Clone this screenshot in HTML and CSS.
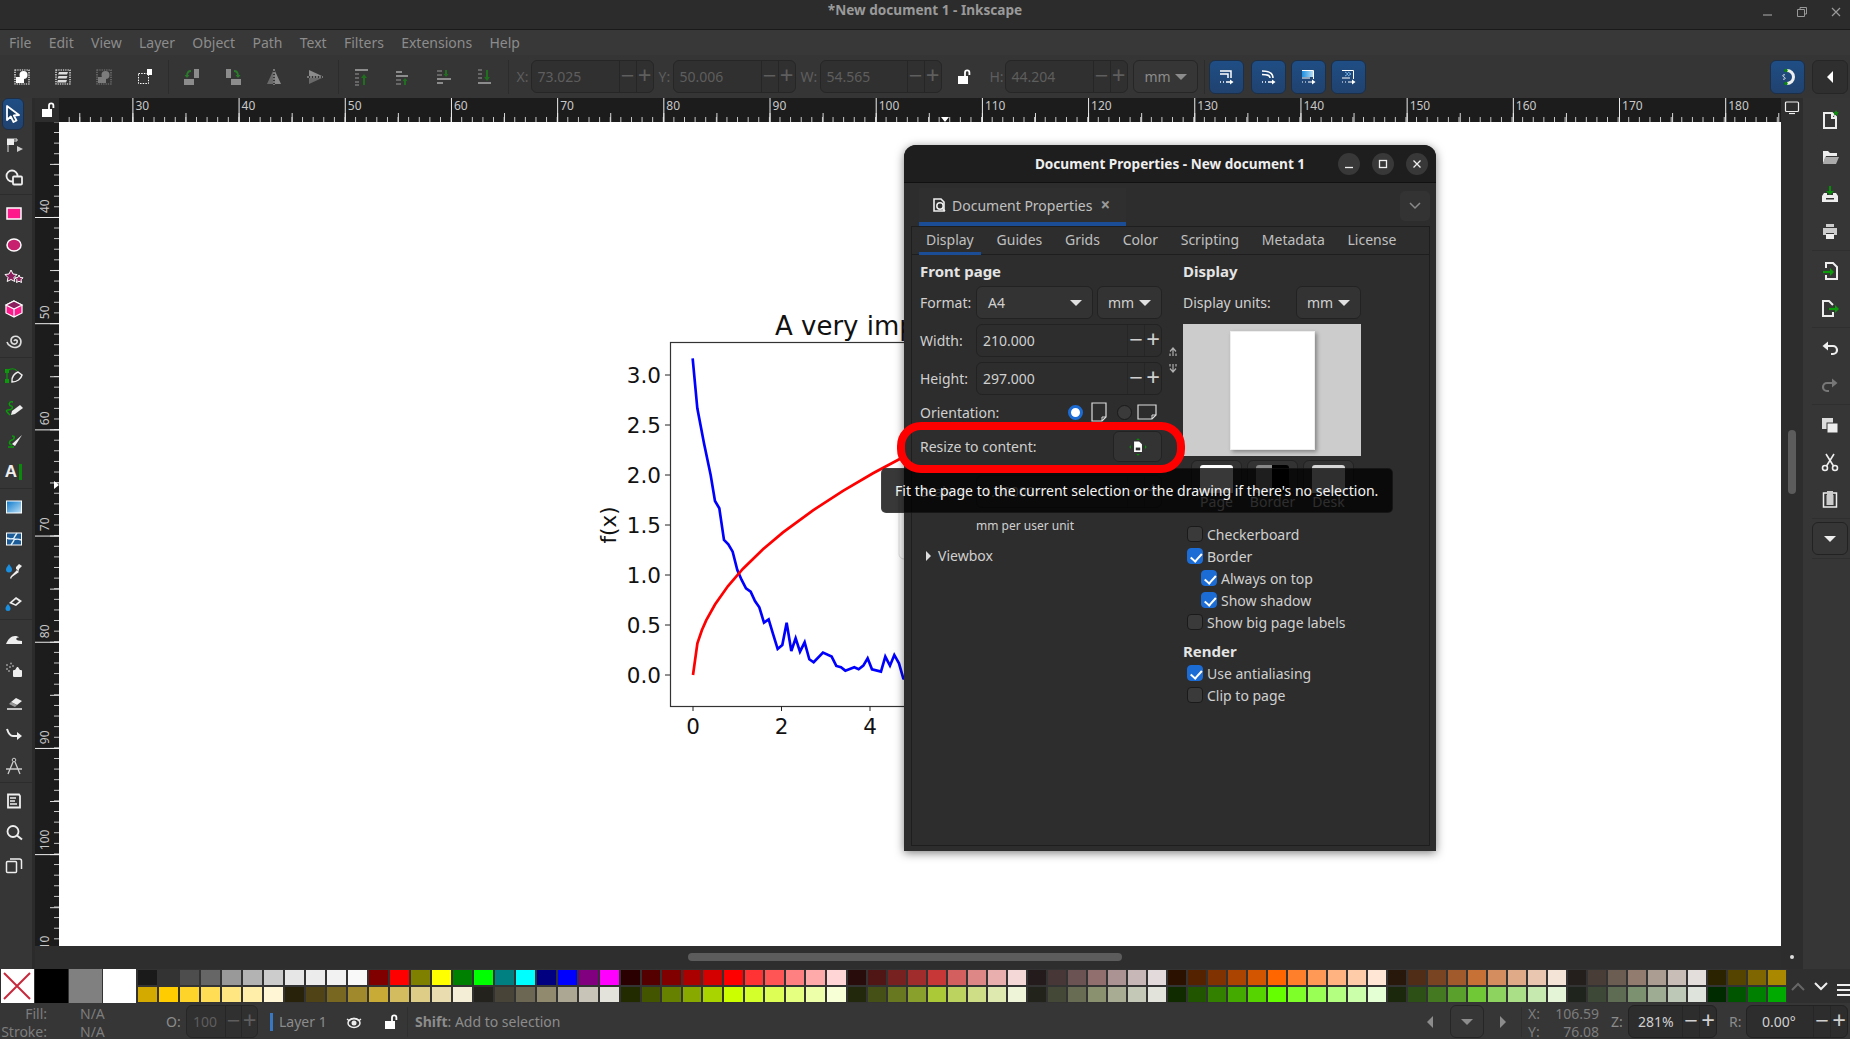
FILE: index.html
```html
<!DOCTYPE html>
<html lang="en">
<head>
    <meta charset="UTF-8">
    <title>*New document 1 - Inkscape</title>
    <link rel="stylesheet" href="styles.css">
</head>
<body>
<svg class="defs" width="0" height="0">
    <symbol id="i-lock" viewBox="0 0 16 16"><rect x="2" y="7" width="10" height="8" fill="currentColor"/><path d="M9 7V3.500a2.200 2.200 0 0 1 4.400 0V6" fill="none" stroke="currentColor" stroke-width="1.800"/></symbol>
    <symbol id="i-dots" viewBox="0 0 20 20"><rect x="3" y="3" width="14" height="14" fill="none" stroke="currentColor" stroke-width="1.200" stroke-dasharray="1.300 1"/></symbol>
    <symbol id="i-flow" viewBox="0 0 20 20"><path d="M4 4h11v7M4 7h8v4M4 15h1M7 15h1M10 15h4" fill="none" stroke="#fff" stroke-width="1.500"/><path d="M14 12.500l3.500 2.500-3.500 2.500z" fill="#fff"/></symbol>
</svg>

<div class="titlebar">
    <span class="title-text">*New document 1 - Inkscape</span>
    <div class="win-btns">
        <svg viewBox="0 0 12 12"><path d="M1 9h9" stroke="#999" stroke-width="1.200"/></svg>
        <svg viewBox="0 0 12 12"><path d="M1.500 3.500h7v7h-7zM4 3.500V1.500h6.500v6.500H8.500" fill="none" stroke="#999"/></svg>
        <svg viewBox="0 0 12 12"><path d="M2 2l8 8M10 2l-8 8" stroke="#999" stroke-width="1.200"/></svg>
    </div>
</div>

<div class="menubar">
    <span>File</span><span>Edit</span><span>View</span><span>Layer</span><span>Object</span><span>Path</span><span>Text</span><span>Filters</span><span>Extensions</span><span>Help</span>
</div>

<div class="toolbar">
    <div class="tb"><svg viewBox="0 0 20 20"><use href="#i-dots" color="#fff"/><rect x="4" y="10" width="8" height="6" fill="#fff"/><circle cx="11.500" cy="8" r="4" fill="#fff"/></svg></div>
    <div class="tb"><svg viewBox="0 0 20 20"><use href="#i-dots" color="#fff"/><path d="M6 5h9l-1 2.500H5zM5.500 9h9l-1 2.500h-9zM5 13h9l-1 2.500H4z" fill="#ddd"/></svg></div>
    <div class="tb dim"><svg viewBox="0 0 20 20"><use href="#i-dots" color="#fff"/><rect x="4" y="10" width="8" height="6" fill="#fff"/><circle cx="11.500" cy="8" r="4" fill="#fff"/></svg></div>
    <div class="tb"><svg viewBox="0 0 20 20"><rect x="3.500" y="6.500" width="10" height="10" fill="none" stroke="#fff" stroke-dasharray="1.500 1.200"/><rect x="12" y="2" width="5" height="6" fill="#fff"/></svg></div>
    <i class="vsep"></i>
    <div class="tb"><svg viewBox="0 0 20 20"><rect x="2" y="12" width="10" height="6" fill="#8c8c8c"/><rect x="12" y="2" width="5" height="9" fill="#8c8c8c"/><path d="M9 4C6 4 5 6 5 9" fill="none" stroke="#2b7a2b" stroke-width="1.800"/><path d="M2.500 8h5l-2.500 3z" fill="#2b7a2b"/></svg></div>
    <div class="tb"><svg viewBox="0 0 20 20"><rect x="8" y="12" width="10" height="6" fill="#8c8c8c"/><rect x="3" y="2" width="5" height="9" fill="#8c8c8c"/><path d="M11 4c3 0 4 2 4 5" fill="none" stroke="#2b7a2b" stroke-width="1.800"/><path d="M17.500 8h-5l2.500 3z" fill="#2b7a2b"/></svg></div>
    <div class="tb"><svg viewBox="0 0 20 20"><path d="M9 4v13H3z" fill="#6a6a6a"/><path d="M11 4v13h6z" fill="#8c8c8c"/><path d="M10 2v16" stroke="#bbb" stroke-dasharray="2 1"/></svg></div>
    <div class="tb"><svg viewBox="0 0 20 20"><path d="M4 3l13 6H4z" fill="#8c8c8c"/><path d="M4 11h13L4 17z" fill="#6a6a6a"/><path d="M2 10h16" stroke="#bbb" stroke-dasharray="2 1"/></svg></div>
    <i class="vsep"></i>
    <div class="tb"><svg viewBox="0 0 20 20"><path d="M3 3h13" stroke="#8c8c8c" stroke-width="2"/><path d="M3 7h4M3 11h4M3 15h4M3 18h4" stroke="#777" stroke-width="1.500"/><path d="M12 18V9" stroke="#1f6f1f" stroke-width="2"/><path d="M9 11l3-4 3 4z" fill="#1f6f1f"/></svg></div>
    <div class="tb"><svg viewBox="0 0 20 20"><path d="M3 5h6" stroke="#8c8c8c" stroke-width="2"/><path d="M3 9h12" stroke="#8c8c8c" stroke-width="2"/><path d="M3 13h5M3 17h5" stroke="#777" stroke-width="1.500"/><path d="M12 18v-5" stroke="#1f6f1f" stroke-width="2"/><path d="M9.500 14l2.500-3 2.500 3z" fill="#1f6f1f"/></svg></div>
    <div class="tb"><svg viewBox="0 0 20 20"><path d="M3 4h5M3 8h5" stroke="#777" stroke-width="1.500"/><path d="M3 12h14" stroke="#8c8c8c" stroke-width="2"/><path d="M3 16h6" stroke="#8c8c8c" stroke-width="2"/><path d="M12 3v5" stroke="#1f6f1f" stroke-width="2"/><path d="M9.500 7l2.500 3 2.500-3z" fill="#1f6f1f"/></svg></div>
    <div class="tb"><svg viewBox="0 0 20 20"><path d="M3 3h4M3 7h4M3 11h4" stroke="#777" stroke-width="1.500"/><path d="M3 16h13" stroke="#8c8c8c" stroke-width="2"/><path d="M12 3v8" stroke="#1f6f1f" stroke-width="2"/><path d="M9 10l3 4 3-4z" fill="#1f6f1f"/></svg></div>
    <i class="vsep vsep-last"></i>
    <span class="tb-label w14">X:</span>
    <div class="spin off w123"><span class="val">73.025</span><span class="pm">−</span><span class="pm">+</span></div>
    <span class="tb-label w14 ml5">Y:</span>
    <div class="spin off w123"><span class="val">50.006</span><span class="pm">−</span><span class="pm">+</span></div>
    <span class="tb-label w19 ml5">W:</span>
    <div class="spin off w122"><span class="val">54.565</span><span class="pm">−</span><span class="pm">+</span></div>
    <div class="tb-lock"><svg><use href="#i-lock" color="#fff"/></svg></div>
    <span class="tb-label w15">H:</span>
    <div class="spin off w123"><span class="val">44.204</span><span class="pm">−</span><span class="pm">+</span></div>
    <div class="combo off tb-unit">mm<i class="caret"></i></div>
    <i class="vsep vsep-unit"></i>
    <div class="bluebtn"><svg viewBox="0 0 20 20"><use href="#i-flow"/></svg></div>
    <div class="bluebtn"><svg viewBox="0 0 20 20"><path d="M4 4c6 0 11 1 11 7M4 7.500c4 0 8 0 8 3.500M4 15h1M7 15h1M10 15h4" fill="none" stroke="#fff" stroke-width="1.500"/><path d="M14 12.500l3.500 2.500-3.500 2.500z" fill="#fff"/></svg></div>
    <div class="bluebtn"><svg viewBox="0 0 20 20"><defs><linearGradient id="g-blue" x1="0" x2="1"><stop offset="0" stop-color="#1c8fe0"/><stop offset="1" stop-color="#b5dcf5"/></linearGradient></defs><rect x="4" y="4" width="11" height="6" fill="url(#g-blue)"/><path d="M4 3.500h11.500V12M4 11h8M4 15h1M7 15h1M10 15h4" fill="none" stroke="#fff"/><path d="M14 12.500l3.500 2.500-3.500 2.500z" fill="#fff"/></svg></div>
    <div class="bluebtn"><svg viewBox="0 0 20 20"><path d="M4 3.500h11.500V12M4 11h8M4 15h1M7 15h1M10 15h4" fill="none" stroke="#fff"/><path d="M7 5l3 2-3 2M10 5l3 2-3 2" fill="none" stroke="#7ab8ea"/><path d="M14 12.500l3.500 2.500-3.500 2.500z" fill="#fff"/></svg></div>
    <div class="tb-spacer"></div>
    <div class="bluebtn"><svg viewBox="0 0 20 20"><path d="M9 3.500a6.500 6.500 0 0 1 0 13" fill="none" stroke="#eee" stroke-width="3"/><circle cx="8" cy="3.500" r="1.700" fill="#0a8a0a"/><circle cx="8" cy="16.500" r="1.700" fill="#0a8a0a"/><path d="M7 8c-2-1-3 1-1 2s1 3-1 2" fill="none" stroke="#eee"/></svg></div>
    <div class="darkbtn"><svg viewBox="0 0 20 20"><path d="M13 4v12l-6-6z" fill="#fff"/></svg></div>
</div>

<div class="main">
    <div class="tools">
        <div class="tool active"><svg viewBox="0 0 20 20"><path d="M4 2v14l3.800-3.500L10.500 18l3-1.500-2.700-5 5.200-.5z" fill="#173a63" stroke="#fff" stroke-width="1.800" stroke-linejoin="round"/></svg></div>
        <div class="tool"><svg viewBox="0 0 20 20"><path d="M3 3h10v2H7l-3 2v9" fill="none" stroke="#ddd"/><rect x="3" y="3" width="7" height="6" fill="#eee"/><path d="M13 10l6 3-6 3z" fill="#ccc"/></svg></div>
        <div class="tool"><svg viewBox="0 0 20 20"><circle cx="8" cy="8" r="5.500" fill="none" stroke="#eee" stroke-width="1.800"/><rect x="9" y="8.500" width="9" height="8" rx="1" fill="#333" stroke="#eee" stroke-width="1.800"/></svg></div>
        <i class="hsep"></i>
        <div class="tool"><svg viewBox="0 0 20 20"><rect x="3" y="5" width="14" height="11" fill="#ff1a8c" stroke="#fff" stroke-width="1.500"/></svg></div>
        <div class="tool"><svg viewBox="0 0 20 20"><ellipse cx="10" cy="10" rx="7" ry="6" fill="#c7206f" stroke="#fff" stroke-width="1.500"/></svg></div>
        <div class="tool"><svg viewBox="0 0 20 20"><path d="M7 3l2 4 4 .5-3 3 .8 4-3.800-2-3.800 2 .8-4-3-3 4-.5z" fill="#8e1f5e" stroke="#fff"/><path d="M15 8l1.200 2.500 2.800.3-2 2 .5 2.700-2.500-1.300-2.500 1.300.5-2.700-2-2 2.800-.3z" fill="#8e1f5e" stroke="#fff"/></svg></div>
        <div class="tool"><svg viewBox="0 0 20 20"><path d="M10 2l8 4v8l-8 4-8-4V6z" fill="#ff1a8c" stroke="#fff" stroke-width="1.200"/><path d="M10 2l8 4-8 4-8-4z" fill="#8e1f5e" stroke="#fff" stroke-width="1.200"/><path d="M10 10v8" stroke="#fff" stroke-width="1.200"/></svg></div>
        <div class="tool"><svg viewBox="0 0 20 20"><path d="M10 10c1-2 4-1 3 1.500s-6 2-6-2 5-5.500 8-3 2.500 8-1.500 9.500S4 15 3 11" fill="none" stroke="#ddd" stroke-width="1.600"/></svg></div>
        <i class="hsep"></i>
        <div class="tool"><svg viewBox="0 0 20 20"><rect x="1" y="3" width="4" height="4" fill="#0a9a0a"/><rect x="1" y="13" width="4" height="4" fill="#0a9a0a"/><path d="M3 7v6M3 5c4-3 8-3 10 0" fill="none" stroke="#0a9a0a" stroke-width="1.200"/><path d="M8 16c-1-5 3-9 6-10l4 3c-1 4-5 7-10 7z" fill="#333" stroke="#eee" stroke-width="1.500"/></svg></div>
        <div class="tool"><svg viewBox="0 0 20 20"><path d="M9 4c-4-1-5 3-2 4s1 4-3 4 1 4 2 5" fill="none" stroke="#0a9a0a" stroke-width="1.500"/><path d="M8 13l8-6 3 3-8 6-4 1z" fill="#eee"/></svg></div>
        <div class="tool"><svg viewBox="0 0 20 20"><path d="M8 6c3 0 3 3 0 4s-4 4 0 5M4 17h6" fill="none" stroke="#0a9a0a" stroke-width="1.500"/><path d="M8 14l10-9-7 11z" fill="#eee"/></svg></div>
        <div class="tool tool-text"><span class="text-a">A</span><i class="text-cursor"></i></div>
        <i class="hsep"></i>
        <div class="tool"><svg viewBox="0 0 20 20"><defs><linearGradient id="g-tool" x1="0" x2="1" y1="0" y2="1"><stop offset="0" stop-color="#0a78cc"/><stop offset="1" stop-color="#bfe2f7"/></linearGradient></defs><rect x="2.500" y="4" width="15" height="12" fill="url(#g-tool)" stroke="#fff"/></svg></div>
        <div class="tool"><svg viewBox="0 0 20 20"><rect x="2.500" y="4" width="15" height="12" fill="#1c5d99" stroke="#fff"/><path d="M3 9c4 2 6 0 7 1s-2 4-3 6M17 11c-4-2-6 0-7-1s2-4 3-6" fill="none" stroke="#e6f2fb" stroke-width="1.400"/></svg></div>
        <div class="tool"><svg viewBox="0 0 20 20"><path d="M5 3c2 3 3 4 3 5.500a3 3 0 0 1-6 0C2 7 3 6 5 3z" fill="#1a8fe0"/><path d="M8 16l-1 2-1-1 1-2 6-6 2 2z" fill="#eee"/><path d="M12 6l3-3 3 2-3 3v2l-3-2z" fill="#eee"/></svg></div>
        <div class="tool"><svg viewBox="0 0 20 20"><path d="M4 11c1.500 2 2.500 3 2.500 4.500a2.500 2.500 0 0 1-5 0C1.500 14 2.500 13 4 11z" fill="#1a8fe0"/><path d="M5 10l7-6 6 4-6 5z" fill="#eee"/><path d="M8 9.500l4-3.300 3 2-3.500 3z" fill="#333"/></svg></div>
        <i class="hsep"></i>
        <div class="tool"><svg viewBox="0 0 20 20"><path d="M2 16c2-5 5-8 9-8 2 0 3 .5 4 1.500-3 0-4 2-1 3l4 .500v3z" fill="#eee"/></svg></div>
        <div class="tool"><svg viewBox="0 0 20 20"><rect x="9" y="10" width="9" height="7" rx="1" fill="#eee"/><path d="M11 10l2-3h1l2 3z" fill="#eee"/><circle cx="3" cy="5" r="1" fill="#999"/><circle cx="6" cy="7" r="1" fill="#999"/><circle cx="3" cy="9" r="1" fill="#999"/><circle cx="7" cy="3.500" r="1" fill="#999"/><circle cx="9" cy="6" r="1" fill="#999"/><circle cx="5" cy="11" r="1" fill="#999"/></svg></div>
        <div class="tool"><svg viewBox="0 0 20 20"><path d="M7 10l5-4 6 3-5 4z" fill="#eee"/><path d="M5 12l2-2 6 3-2 2z" fill="#999"/><path d="M3 17h15" stroke="#eee" stroke-width="1.500"/></svg></div>
        <div class="tool"><svg viewBox="0 0 20 20"><path d="M3 5c2 6 4 7 6 7 1.500 0 3 0 5 0" fill="none" stroke="#eee" stroke-width="2"/><path d="M13 8l5 4-5 4z" fill="#eee"/></svg></div>
        <div class="tool"><svg viewBox="0 0 20 20"><circle cx="10" cy="4" r="1.800" fill="none" stroke="#ccc"/><path d="M9 6L4 18M11 6l5 12M2 13h16" fill="none" stroke="#ccc" stroke-width="1.300"/></svg></div>
        <i class="hsep"></i>
        <div class="tool"><svg viewBox="0 0 20 20"><path d="M4 3.500h11l1 1.500v11.500H4z" fill="none" stroke="#eee" stroke-width="1.800"/><path d="M6 7h6M6 10h5M6 13h7" stroke="#eee" stroke-width="1.300"/></svg></div>
        <div class="tool"><svg viewBox="0 0 20 20"><circle cx="9" cy="8.500" r="5.500" fill="none" stroke="#eee" stroke-width="1.800"/><path d="M13 12.500l5 4" stroke="#eee" stroke-width="2"/></svg></div>
        <div class="tool"><svg viewBox="0 0 20 20"><rect x="2.500" y="6.500" width="10" height="11" rx="1" fill="none" stroke="#eee" stroke-width="1.500"/><path d="M6 4h9.500a2 2 0 0 1 2 2v8" fill="none" stroke="#eee" stroke-width="1.500"/></svg></div>
    </div>

    <div class="center">
        <div class="work">
            <div class="corner"><svg><use href="#i-lock" color="#fff"/></svg></div>
            <div class="ruler-h">
                <span>30</span><span>40</span><span>50</span><span>60</span><span>70</span><span>80</span><span>90</span><span>100</span>
                <span>110</span><span>120</span><span>130</span><span>140</span><span>150</span><span>160</span><span>170</span><span>180</span>
                <i class="marker-h"></i>
            </div>
            <div class="ruler-v">
                <span class="first">40</span><span>50</span><span>60</span><span>70</span><span>80</span><span>90</span><span>100</span><span>110</span>
                <i class="marker-v"></i>
            </div>
            <div class="canvas">
                <svg class="plot" viewBox="59 122 1722 824">
                    <rect x="899" y="490" width="30" height="69" rx="5" fill="#fff" stroke="#ddd"/>
                    <text class="plot-title" x="775" y="335">A very important plot</text>
                    <rect x="670.500" y="342.500" width="400" height="364" fill="none" stroke="#333" stroke-width="1.200"/>
                    <path d="M665 375h5M665 425h5M665 475h5M665 525h5M665 575h5M665 625h5M665 675h5M693 706v5M781.500 706v5M870 706v5" stroke="#222"/>
                    <g class="plot-y">
                        <text x="661" y="383">3.0</text><text x="661" y="433">2.5</text><text x="661" y="483">2.0</text><text x="661" y="533">1.5</text><text x="661" y="583">1.0</text><text x="661" y="633">0.5</text><text x="661" y="683">0.0</text>
                    </g>
                    <g class="plot-x">
                        <text x="693" y="734">0</text><text x="781.500" y="734">2</text><text x="870" y="734">4</text>
                    </g>
                    <text class="plot-f" transform="translate(616 525) rotate(-90)">f(x)</text>
                    <g transform="translate(580 300) scale(.3333)" fill="none" stroke-width="8">
                        <path stroke="#00f" d="M338 175L352 325 372 430 392 525 405 603 418 625 432 720 445 733 458 755 472 810 485 840 498 865 512 875 525 903 538 922 552 968 566 958 580 1005 593 1047 607 1035 620 968 634 1053 647 1015 660 1055 674 1027 688 1078 701 1087 729 1058 755 1070 769 1098 783 1102 796 1112 823 1102 836 1108 850 1097 863 1075 876 1108 903 1115 916 1070 930 1097 943 1065 957 1090 970 1135 990 1140"/>
                    </g>
                    <path fill="none" stroke="#f00" stroke-width="2.700" d="M693 675L697.400 643.400 701.850 630.300 706.300 620.200 715 604.500 728 586 743 568.700 763 549.200 783 532.400 813 510.300 843 490.900 873 473.300 903 457.200 933 442.100"/>
                </svg>
            </div>
        </div>
        <div class="hscroll"><i></i></div>
    </div>

    <div class="vscroll">
        <svg viewBox="0 0 16 16"><rect x="1.500" y="2" width="13" height="9.500" rx="1" fill="none" stroke="#eee" stroke-width="1.200"/><path d="M5 13.500h6" stroke="#eee" stroke-width="1.200"/></svg>
        <i class="vthumb"></i>
        <i class="vdot"></i>
    </div>

    <div class="side">
        <div class="side-btn"><svg viewBox="0 0 20 20"><path d="M4 3h8l4 4v11H4z" fill="none" stroke="#eee" stroke-width="2"/><path d="M11 3h2v4h3v2h-5z" fill="#eee"/><path d="M16 0l1 2 2 .2-1.500 1.400.5 2-2-1-2 1 .5-2L13 2.200l2-.2z" fill="#0a8a0a"/></svg></div>
        <div class="side-btn"><svg viewBox="0 0 20 20"><path d="M3 4h5l2 2h7v3H6l-3 8z" fill="#eee"/><path d="M5 10h14l-3 7H3z" fill="#aaa"/></svg></div>
        <div class="side-btn"><svg viewBox="0 0 20 20"><path d="M2 12l2-3h3v2h6V9h3l2 3v6H2z" fill="#eee"/><rect x="6" y="14" width="8" height="1.500" fill="#333"/><path d="M10 2v7" stroke="#0a8a0a" stroke-width="2.200"/><path d="M6 7h8l-4 4z" fill="#0a8a0a"/></svg></div>
        <div class="side-btn"><svg viewBox="0 0 20 20"><rect x="6" y="3" width="8" height="3" fill="#ccc"/><path d="M3 7h14v7h-3v-2H6v2H3z" fill="#ccc"/><rect x="6" y="13" width="8" height="5" fill="#eee"/></svg></div>
        <i class="hsep"></i>
        <div class="side-btn"><svg viewBox="0 0 20 20"><path d="M6 7V2h7l4 4v12H6v-4" fill="none" stroke="#eee" stroke-width="2"/><path d="M3 11h9" stroke="#0a9a0a" stroke-width="2.200"/><path d="M10 7l4 4-4 4z" fill="#0a9a0a"/></svg></div>
        <div class="side-btn"><svg viewBox="0 0 20 20"><path d="M13 7l-4-4H3v15h10v-4" fill="none" stroke="#eee" stroke-width="2"/><path d="M9 11h8" stroke="#0a9a0a" stroke-width="2.200"/><path d="M15 7l4 4-4 4z" fill="#0a9a0a"/></svg></div>
        <i class="hsep"></i>
        <div class="side-btn"><svg viewBox="0 0 20 20"><path d="M5 8h8a3.500 3.500 0 0 1 0 8h-2" fill="none" stroke="#eee" stroke-width="2.200"/><path d="M8 3.500v9L2.500 8z" fill="#eee"/></svg></div>
        <div class="side-btn"><svg viewBox="0 0 20 20"><path d="M15 8H7a3.500 3.500 0 0 0 0 8h2" fill="none" stroke="#777" stroke-width="2.200"/><path d="M12 3.500v9L17.500 8z" fill="#777"/></svg></div>
        <i class="hsep"></i>
        <div class="side-btn"><svg viewBox="0 0 20 20"><rect x="2" y="3" width="11" height="11" fill="#ddd"/><rect x="7" y="8" width="11" height="10" fill="#eee" stroke="#363636"/></svg></div>
        <div class="side-btn"><svg viewBox="0 0 20 20"><circle cx="5" cy="16" r="2.500" fill="none" stroke="#eee" stroke-width="1.600"/><circle cx="15" cy="16" r="2.500" fill="none" stroke="#eee" stroke-width="1.600"/><path d="M6.500 14L14 2M13.500 14L6 2" stroke="#eee" stroke-width="1.600"/></svg></div>
        <div class="side-btn"><svg viewBox="0 0 20 20"><rect x="3.500" y="4" width="13" height="14" fill="none" stroke="#eee" stroke-width="1.500"/><rect x="7" y="2" width="6" height="4" fill="#ccc"/><rect x="6.500" y="6" width="7" height="10" fill="#ccc"/></svg></div>
        <i class="hsep"></i>
        <div class="side-more"><i class="caret big"></i></div>
        <i class="hsep"></i>
    </div>
</div>

<div class="palette">
    <div class="big-sw none"><svg viewBox="0 0 32 32"><path d="M3 3l26 26M29 3L3 29" stroke="#c8283c" stroke-width="2"/></svg></div>
    <div class="big-sw sw-black"></div>
    <div class="big-sw sw-gray"></div>
    <div class="big-sw sw-white"></div>
    <div class="swatches">
        <i style="background:#1a1a1a"></i><i style="background:#333"></i><i style="background:#4d4d4d"></i><i style="background:#666"></i><i style="background:#999"></i><i style="background:#b3b3b3"></i><i style="background:#ccc"></i><i style="background:#e6e6e6"></i><i style="background:#ececec"></i><i style="background:#f2f2f2"></i><i style="background:#f9f9f9"></i>
        <i style="background:#800000"></i><i style="background:#f00"></i><i style="background:#808000"></i><i style="background:#ff0"></i><i style="background:#008000"></i><i style="background:#0f0"></i><i style="background:#008080"></i><i style="background:#0ff"></i><i style="background:#000080"></i><i style="background:#00f"></i><i style="background:#800080"></i><i style="background:#f0f"></i>
        <i style="background:#2b0000"></i><i style="background:#550000"></i><i style="background:#800000"></i><i style="background:#aa0000"></i><i style="background:#d40000"></i><i style="background:#f00"></i><i style="background:#f33"></i><i style="background:#f55"></i><i style="background:#ff8080"></i><i style="background:#faa"></i><i style="background:#ffd5d5"></i>
        <i style="background:#280b0b"></i><i style="background:#501616"></i><i style="background:#782121"></i><i style="background:#a02c2c"></i><i style="background:#c83737"></i><i style="background:#d35f5f"></i><i style="background:#de8787"></i><i style="background:#e9afaf"></i><i style="background:#f4d7d7"></i>
        <i style="background:#241c1c"></i><i style="background:#483737"></i><i style="background:#6c5353"></i><i style="background:#916f6f"></i><i style="background:#ac9393"></i><i style="background:#c8b7b7"></i><i style="background:#e3dbdb"></i>
        <i style="background:#2b1100"></i><i style="background:#552200"></i><i style="background:#803300"></i><i style="background:#a40"></i><i style="background:#d45500"></i><i style="background:#f60"></i><i style="background:#ff7f2a"></i><i style="background:#f95"></i><i style="background:#ffb380"></i><i style="background:#fca"></i><i style="background:#ffe6d5"></i>
        <i style="background:#28170b"></i><i style="background:#502d16"></i><i style="background:#784421"></i><i style="background:#a05a2c"></i><i style="background:#c87137"></i><i style="background:#d38d5f"></i><i style="background:#deaa87"></i><i style="background:#e9c6af"></i><i style="background:#f4e3d7"></i>
        <i style="background:#241f1c"></i><i style="background:#483e37"></i><i style="background:#6c5d53"></i><i style="background:#917c6f"></i><i style="background:#ac9d93"></i><i style="background:#c8beb7"></i><i style="background:#e3dedb"></i>
        <i style="background:#2b2200"></i><i style="background:#540"></i><i style="background:#806600"></i><i style="background:#a80"></i>

        <i style="background:#d4aa00"></i><i style="background:#fc0"></i><i style="background:#ffd42a"></i><i style="background:#fd5"></i><i style="background:#ffe680"></i><i style="background:#fea"></i><i style="background:#fff6d5"></i>
        <i style="background:#28220b"></i><i style="background:#504416"></i><i style="background:#786721"></i><i style="background:#a0892c"></i><i style="background:#c8ab37"></i><i style="background:#d3bc5f"></i><i style="background:#decd87"></i><i style="background:#e9ddaf"></i><i style="background:#f4eed7"></i>
        <i style="background:#24221c"></i><i style="background:#484437"></i><i style="background:#6c6753"></i><i style="background:#918a6f"></i><i style="background:#aca793"></i><i style="background:#c8c4b7"></i><i style="background:#e3e2db"></i>
        <i style="background:#222b00"></i><i style="background:#450"></i><i style="background:#668000"></i><i style="background:#8a0"></i><i style="background:#aad400"></i><i style="background:#cf0"></i><i style="background:#d4ff2a"></i><i style="background:#df5"></i><i style="background:#e5ff80"></i><i style="background:#efa"></i><i style="background:#f6ffd5"></i>
        <i style="background:#22280b"></i><i style="background:#445016"></i><i style="background:#677821"></i><i style="background:#89a02c"></i><i style="background:#abc837"></i><i style="background:#bcd35f"></i><i style="background:#cdde87"></i><i style="background:#dde9af"></i><i style="background:#eef4d7"></i>
        <i style="background:#22241c"></i><i style="background:#444837"></i><i style="background:#676c53"></i><i style="background:#8a916f"></i><i style="background:#a7ac93"></i><i style="background:#c4c8b7"></i><i style="background:#e2e3db"></i>
        <i style="background:#112b00"></i><i style="background:#250"></i><i style="background:#338000"></i><i style="background:#4a0"></i><i style="background:#55d400"></i><i style="background:#6f0"></i><i style="background:#7fff2a"></i><i style="background:#9f5"></i><i style="background:#b3ff80"></i><i style="background:#cfa"></i><i style="background:#e5ffd5"></i>
        <i style="background:#1c280b"></i><i style="background:#2d5016"></i><i style="background:#447821"></i><i style="background:#5aa02c"></i><i style="background:#71c837"></i><i style="background:#8dd35f"></i><i style="background:#aade87"></i><i style="background:#c6e9af"></i><i style="background:#e3f4d7"></i>
        <i style="background:#1f241c"></i><i style="background:#3e4837"></i><i style="background:#5d6c53"></i><i style="background:#7c916f"></i><i style="background:#9dac93"></i><i style="background:#bec8b7"></i><i style="background:#dee3db"></i>
        <i style="background:#002b00"></i><i style="background:#050"></i><i style="background:#008000"></i><i style="background:#0a0"></i>
    </div>
    <svg class="pal-ctl" viewBox="0 0 63 34">
        <path d="M4 21l6-6 6 6" fill="none" stroke="#666" stroke-width="2"/>
        <path d="M27 14l6 6 6-6" fill="none" stroke="#eee" stroke-width="2"/>
        <path d="M49 16h14M49 21h14M49 26h14" stroke="#eee" stroke-width="2"/>
    </svg>
</div>

<div class="statusbar">
    <div class="fillstroke">
        <span class="fs-l">Fill:</span><span>N/A</span>
        <span class="fs-l">Stroke:</span><span>N/A</span>
    </div>
    <span class="st-o">O:</span>
    <div class="spin off st-op"><span class="val">100</span><span class="pm">−</span><span class="pm">+</span></div>
    <i class="layer-bar"></i>
    <span class="st-layer">Layer 1</span>
    <svg class="st-eye" viewBox="0 0 16 16"><path d="M1 5l2 1.500C6 4 10 4 13 6.500L15 5" fill="none" stroke="#eee" stroke-width="1.400"/><ellipse cx="8" cy="9" rx="6" ry="4.500" fill="none" stroke="#eee" stroke-width="1.500"/><circle cx="8" cy="9" r="2.500" fill="#eee"/></svg>
    <svg class="st-lock"><use href="#i-lock" color="#fff"/></svg>
    <i class="st-sep"></i>
    <span class="st-msg"><b>Shift</b>: Add to selection</span>
    <div class="st-right">
        <svg class="st-arrow" viewBox="0 0 10 16"><path d="M8 2v12L2 8z" fill="#8c8c8c"/></svg>
        <div class="combo off st-page"><i class="caret"></i></div>
        <svg class="st-arrow" viewBox="0 0 10 16"><path d="M2 2v12l6-6z" fill="#8c8c8c"/></svg>
        <i class="st-sep st-sep2"></i>
        <div class="coords">
            <span>X:</span><span class="num">106.59</span>
            <span>Y:</span><span class="num">76.08</span>
        </div>
        <span class="st-z">Z:</span>
        <div class="spin st-zoom"><span class="val">281%</span><span class="pm">−</span><span class="pm">+</span></div>
        <span class="st-r">R:</span>
        <div class="spin st-rot"><span class="val">0.00°</span><span class="pm">−</span><span class="pm">+</span></div>
    </div>
</div>

<!-- floating dialog, on top of the canvas -->
<div class="dialog">
    <div class="dlg-head">
        <span class="dlg-title">Document Properties - New document 1</span>
        <div class="dlg-btns">
            <span><svg viewBox="0 0 12 12"><path d="M2 9.500h8" stroke="#eee" stroke-width="1.300"/></svg></span>
            <span><svg viewBox="0 0 12 12"><rect x="2.500" y="2.500" width="7" height="7" fill="none" stroke="#eee" stroke-width="1.300"/></svg></span>
            <span><svg viewBox="0 0 12 12"><path d="M2.500 2.500l7 7M9.500 2.500l-7 7" stroke="#eee" stroke-width="1.300"/></svg></span>
        </div>
    </div>
    <div class="dock-tabs">
        <div class="dock-tab">
            <svg viewBox="0 0 16 16"><path d="M3 2h7l3 3v9H3z" fill="none" stroke="#eee" stroke-width="1.600"/><circle cx="9" cy="9" r="3.200" fill="none" stroke="#eee" stroke-width="1.500"/><path d="M11 11l3 3" stroke="#eee" stroke-width="1.500"/></svg>
            <span>Document Properties</span>
            <b>×</b>
        </div>
        <div class="dock-more"><svg viewBox="0 0 16 16"><path d="M3 5l5 5 5-5" fill="none" stroke="#8a8a8a" stroke-width="1.500"/></svg></div>
    </div>
    <div class="pane">
        <div class="nb-tabs">
            <span class="on">Display</span><span>Guides</span><span>Grids</span><span>Color</span><span>Scripting</span><span>Metadata</span><span>License</span>
        </div>
        <div class="nb-body">
            <div class="col-left">
                <h3>Front page</h3>
                <div class="row">
                    <label class="lbl-56">Format:</label>
                    <div class="combo grow">A4<i class="caret"></i></div>
                    <div class="combo unit">mm<i class="caret"></i></div>
                </div>
                <div class="row">
                    <label class="lbl-56">Width:</label>
                    <div class="spin grow"><span class="val">210.000</span><span class="pm">−</span><span class="pm">+</span></div>
                </div>
                <div class="row">
                    <label class="lbl-56">Height:</label>
                    <div class="spin grow"><span class="val">297.000</span><span class="pm">−</span><span class="pm">+</span></div>
                </div>
                <div class="row orient">
                    <label>Orientation:</label>
                    <div class="orient-opts">
                        <i class="radio on"></i>
                        <svg class="port" viewBox="0 0 16 20"><path d="M1 1h14v14l-4 4H1z" fill="none" stroke="#ddd" stroke-width="1.200"/><path d="M11 19v-4h4" fill="none" stroke="#ddd"/></svg>
                        <i class="radio"></i>
                        <svg class="land" viewBox="0 0 20 16"><path d="M1 1h18v10l-4 4H1z" fill="none" stroke="#ddd" stroke-width="1.200"/><path d="M15 15v-4h4" fill="none" stroke="#ddd"/></svg>
                    </div>
                </div>
                <div class="row resize">
                    <label>Resize to content:</label>
                    <div class="resize-btn"><svg viewBox="0 0 16 16"><path d="M4.500 3h4.500l2.500 2.500V12.500h-7z" fill="#fff"/><path d="M6 8.500h4v2.500H6z" fill="#2d2d2d"/><path d="M8 .2l1.700 1.600H6.300zM8 15.800l1.700-1.600H6.300zM.2 8L1.800 6.300v3.400zM15.800 8L14.200 6.300v3.400z" fill="#0a8a0a"/></svg></div>
                </div>
                <div class="row scale">
                    <label class="lbl-56">Scale x:</label>
                    <div class="spin grow"><span class="val">1.00000</span><span class="pm">−</span><span class="pm">+</span></div>
                </div>
                <div class="per-unit">mm per user unit</div>
                <div class="viewbox"><i></i>Viewbox</div>
            </div>
            <svg class="link" viewBox="0 0 12 30"><path d="M6 11V4M3 6.500L6 3l3 3.500M3 11V8.500M9 11V8.500M6 19v7M3 23.500L6 27l3-3.500M3 19v2.500M9 19v2.500" fill="none" stroke="#b0b0b0" stroke-width="1.200"/></svg>
            <div class="col-right">
                <h3>Display</h3>
                <div class="row">
                    <label class="lbl-units">Display units:</label>
                    <div class="combo unit">mm<i class="caret"></i></div>
                </div>
                <div class="preview"><div class="sheet"></div></div>
                <div class="colors">
                    <div class="color-cell"><div class="color-btn"><i class="c-page"></i></div><span>Page</span></div>
                    <div class="color-cell"><div class="color-btn"><i class="c-border"></i></div><span>Border</span></div>
                    <div class="color-cell"><div class="color-btn"><i class="c-desk"></i></div><span>Desk</span></div>
                </div>
                <div class="chk"><i></i>Checkerboard</div>
                <div class="chk"><i class="on"></i>Border</div>
                <div class="chk sub"><i class="on"></i>Always on top</div>
                <div class="chk sub"><i class="on"></i>Show shadow</div>
                <div class="chk"><i></i>Show big page labels</div>
                <h3 class="render">Render</h3>
                <div class="chk"><i class="on"></i>Use antialiasing</div>
                <div class="chk"><i></i>Clip to page</div>
            </div>
        </div>
    </div>
</div>

<div class="tooltip">Fit the page to the current selection or the drawing if there's no selection.</div>
<div class="red-oval"></div>
</body>
</html>
```

FILE: styles.css
```css
* {
    box-sizing: border-box;
    margin: 0;
    padding: 0;
}
body {
    width: 1850px;
    height: 1039px;
    overflow: hidden;
    position: relative;
    display: flex;
    flex-direction: column;
    background-color: #363636;
    font-family: "Noto Sans", "Open Sans", sans-serif;
    font-size: 14px;
    color: #8c8c8c;
}
i {
    display: block;
    font-style: normal;
}
.defs {
    position: absolute;
}

/* TITLE + MENU */
.titlebar {
    flex: none;
    height: 30px;
    background-color: #2c2c2c;
    border-bottom: 1px solid #1a1a1a;
    position: relative;
    display: flex;
    justify-content: center;
    align-items: center;
}
.title-text {
    font-weight: 700;
    font-size: 13.600px;
    color: #9a9a9a;
    margin-bottom: 9px;
    line-height: 18px;
}
.win-btns {
    position: absolute;
    right: 8px;
    top: 6px;
    display: flex;
    gap: 22px;
}
.win-btns svg {
    width: 12px;
    height: 12px;
}
.menubar {
    flex: none;
    height: 25px;
    background-color: #383838;
    display: flex;
    align-items: center;
    padding-left: 9px;
    gap: 17.300px;
}

/* TOP TOOLBAR */
.toolbar {
    flex: none;
    height: 43px;
    background-color: #353535;
    display: flex;
    align-items: center;
    padding-left: 1px;
}
.tb {
    width: 41px;
    height: 34px;
    flex: none;
    display: flex;
    align-items: center;
    justify-content: center;
}
.tb svg {
    width: 20px;
    height: 20px;
}
.tb.dim {
    opacity: 0.35;
}
.vsep {
    flex: none;
    width: 1px;
    height: 34px;
    background-color: #2c2c2c;
    margin: 0 2.500px;
}
.vsep-last {
    margin-right: 8px;
}
.vsep-unit {
    margin: 0 4px 0 6px;
}
.vsep-unit + .bluebtn {
    margin-right: 7px;
}
.tb-label {
    flex: none;
    color: #5e5e5e;
}
.w14 { width: 14px; }
.w15 { width: 15px; }
.w19 { width: 19px; }
.w122 { width: 122px; }
.w123 { width: 123px; }
.ml5 { margin-left: 5px; }
.tb-lock {
    flex: none;
    width: 48px;
    display: flex;
    justify-content: center;
    padding-right: 3px;
}
.tb-lock svg {
    width: 16px;
    height: 16px;
}
.tb-unit {
    flex: none;
    width: 65px;
    height: 34px;
    margin-left: 5px;
    padding: 0 11px 0 7px;
}
.tb-spacer {
    flex: 1;
}
.bluebtn {
    flex: none;
    width: 35px;
    height: 34px;
    margin-right: 5px;
    border-radius: 6px;
    border: 1px solid #1d2f47;
    background: linear-gradient(#1f4e85, #20426f);
    display: flex;
    align-items: center;
    justify-content: center;
}
.bluebtn svg {
    width: 20px;
    height: 20px;
}
.darkbtn {
    flex: none;
    width: 36px;
    height: 34px;
    margin-right: 2px;
    margin-left: 2px;
    border-radius: 6px;
    border: 1px solid #262626;
    background-color: #2f2f2f;
    display: flex;
    align-items: center;
    justify-content: center;
}
.darkbtn svg {
    width: 20px;
    height: 20px;
}

/* SPIN + COMBO */
.spin {
    display: flex;
    align-items: stretch;
    height: 33px;
    border: 1px solid #222;
    border-radius: 6px;
    background-color: #2d2d2d;
    color: #d0d0d0;
}
.spin .val {
    flex: 1;
    padding-left: 6px;
    line-height: 31px;
}
.spin .pm {
    flex: none;
    width: 17px;
    text-align: center;
    line-height: 28px;
    font-size: 24px;
    border-left: 1px solid #262626;
}
.spin.off {
    background-color: #303030;
    border-color: #262626;
    color: #5e5e5e;
}
.combo {
    display: flex;
    align-items: center;
    justify-content: space-between;
    height: 33px;
    padding: 0 10px 0 11px;
    border: 1px solid #222;
    border-radius: 6px;
    background-color: #333;
    color: #d0d0d0;
}
.combo.off {
    color: #8c8c8c;
    border-color: #262626;
    background-color: #363636;
    flex: none;
}
.caret {
    width: 0;
    height: 0;
    border-left: 6px solid transparent;
    border-right: 6px solid transparent;
    border-top: 6px solid #e0e0e0;
}
.combo.off .caret {
    border-top-color: #8c8c8c;
}

/* MAIN AREA */
.main {
    flex: none;
    height: 871px;
    display: flex;
}
.tools {
    flex: none;
    width: 35px;
    background-color: #363636;
    border-right: 3px solid #2b2b2b;
}
.tool {
    width: 27px;
    height: 32px;
    display: flex;
    align-items: center;
    justify-content: center;
}
.tool svg {
    width: 20px;
    height: 20px;
}
.tool.active {
    width: 22px;
    margin-left: 2px;
    border-radius: 6px;
    border: 1px solid #1d2f47;
    background: linear-gradient(#1f4e85, #20426f);
}
.text-a {
    font-family: "Liberation Sans", sans-serif;
    font-weight: 700;
    font-size: 17px;
    color: #eee;
}
.text-cursor {
    width: 3px;
    height: 16px;
    background-color: #0a8a0a;
    margin-left: 2px;
}
.hsep {
    height: 1px;
    background-color: #2c2c2c;
    margin-bottom: 2px;
}
.center {
    flex: none;
    width: 1746px;
    display: flex;
    flex-direction: column;
}
.work {
    flex: none;
    height: 848px;
    display: grid;
    grid-template-columns: 24px 1fr;
    grid-template-rows: 24px 1fr;
}
.corner {
    background-color: #2d2d2d;
    display: flex;
    align-items: center;
    justify-content: flex-end;
    padding-right: 3px;
}
.corner svg {
    width: 16px;
    height: 16px;
}

/* RULERS */
.ruler-h {
    display: flex;
    position: relative;
    overflow: hidden;
    padding-left: 73.400px;
    background-color: #1c1c1c;
    background-image:
        linear-gradient(90deg, #eee 1px, transparent 1px),
        linear-gradient(90deg, #ddd 1px, transparent 1px),
        linear-gradient(90deg, #ccc 1px, transparent 1px);
    background-size: 106.200px 24px, 53.100px 9px, 10.620px 5px;
    background-position: 73.400px bottom, 20.300px bottom, 9.680px bottom;
    background-repeat: repeat-x;
}
.ruler-h span {
    flex: none;
    width: 106.200px;
    padding-left: 3px;
    font-size: 12px;
    line-height: 16px;
    color: #c8c8c8;
}
.marker-h {
    position: absolute;
    left: 882px;
    bottom: 0;
    border-left: 4px solid transparent;
    border-right: 4px solid transparent;
    border-top: 5px solid #fff;
}
.ruler-v {
    display: flex;
    flex-direction: column;
    position: relative;
    overflow: hidden;
    background-color: #1c1c1c;
    background-image:
        linear-gradient(#eee 1px, transparent 1px),
        linear-gradient(#ddd 1px, transparent 1px),
        linear-gradient(#ccc 1px, transparent 1px);
    background-size: 24px 106.200px, 9px 53.100px, 5px 10.620px;
    background-position: right 95px, right 41.900px, right 10.040px;
    background-repeat: repeat-y;
}
.ruler-v span {
    flex: none;
    height: 106.200px;
    display: flex;
    align-items: center;
    justify-content: flex-start;
    writing-mode: vertical-rl;
    transform: rotate(180deg);
    padding-top: 4px;
    padding-left: 4px;
    font-size: 12px;
    line-height: 12px;
    color: #c8c8c8;
}
.ruler-v span.first {
    height: 95px;
}
.marker-v {
    position: absolute;
    right: 0;
    top: 359px;
    border-top: 4px solid transparent;
    border-bottom: 4px solid transparent;
    border-left: 5px solid #fff;
}
.canvas {
    background-color: #fff;
    position: relative;
    overflow: hidden;
}
.plot {
    position: absolute;
    left: 0;
    top: 0;
    width: 1722px;
    height: 824px;
    font-family: "DejaVu Sans", sans-serif;
}
.plot text {
    fill: #111;
}
.plot-title {
    font-size: 26px;
}
.plot-y text {
    font-size: 21.500px;
    text-anchor: end;
}
.plot-x text {
    font-size: 21.500px;
    text-anchor: middle;
}
.plot-f {
    font-size: 21.500px;
    text-anchor: middle;
}
.hscroll {
    flex: none;
    height: 23px;
    background-color: #2e2e2e;
    padding: 7px 0 0 653px;
}
.hscroll i {
    width: 434px;
    height: 8px;
    border-radius: 4px;
    background-color: #5c5c5c;
}
.vscroll {
    flex: none;
    width: 22px;
    background-color: #2d2d2d;
    position: relative;
}
.vscroll svg {
    position: absolute;
    left: 3px;
    top: 2px;
    width: 16px;
    height: 16px;
}
.vthumb {
    position: absolute;
    left: 7px;
    top: 332px;
    width: 8px;
    height: 64px;
    border-radius: 4px;
    background-color: #5c5c5c;
}
.vdot {
    position: absolute;
    left: 9px;
    top: 857px;
    width: 4px;
    height: 4px;
    border-radius: 50%;
    background-color: #ddd;
}
.side {
    flex: none;
    width: 47px;
    padding-top: 3px;
    background-color: #363636;
}
.side-btn {
    height: 37px;
    display: flex;
    align-items: center;
    justify-content: center;
    padding-left: 6px;
}
.side-btn svg {
    width: 20px;
    height: 20px;
}
.side .hsep {
    margin: 1px 0 1px 9px;
    background-color: #2f2f2f;
}
.side-more {
    width: 36px;
    height: 33px;
    margin: 3px 0 3px 9px;
    border: 1px solid #222;
    border-radius: 6px;
    display: flex;
    align-items: center;
    justify-content: center;
}
.caret.big {
    border-top-color: #eee;
}

/* PALETTE */
.palette {
    flex: none;
    height: 34px;
    display: flex;
    background-color: #2f2f2f;
    padding-left: 1px;
}
.big-sw {
    flex: none;
    width: 34px;
    height: 34px;
    border-right: 1px solid #333;
}
.big-sw svg {
    width: 32px;
    height: 34px;
    display: block;
}
.none { background-color: #fff; }
.sw-black { background-color: #000; }
.sw-gray { background-color: #808080; }
.sw-white { background-color: #fff; }
.swatches {
    flex: none;
    width: 1651px;
    display: grid;
    grid-template-columns: repeat(23, 21px) repeat(11, 20.600px) repeat(47, 20.020px);
    grid-template-rows: 17px 17px;
}
.swatches i {
    border: 1px solid #333;
}
.pal-ctl {
    flex: none;
    width: 63px;
    height: 34px;
}

/* STATUS BAR */
.statusbar {
    flex: none;
    height: 36px;
    display: flex;
    align-items: flex-start;
    padding-top: 2px;
    background-color: #363636;
    overflow: hidden;
}
.fillstroke {
    flex: none;
    width: 147px;
    display: grid;
    grid-template-columns: 47px 100px;
    line-height: 18px;
    color: #7d7d7d;
}
.fillstroke span:nth-child(even) {
    padding-left: 33px;
    white-space: nowrap;
}
.fs-l {
    text-align: right;
}
.st-o {
    flex: none;
    width: 39px;
    line-height: 33px;
    margin-left: 19px;
    margin-right: -19px;
}
.st-op {
    flex: none;
    width: 72px;
}
.st-op .pm {
    width: 16px;
}
.layer-bar {
    flex: none;
    width: 3px;
    height: 18px;
    margin: 8px 0 0 12px;
    background-color: #3a77c2;
}
.st-layer {
    flex: none;
    width: 67px;
    line-height: 33px;
    margin-left: 6px;
}
.st-eye {
    flex: none;
    width: 16px;
    height: 16px;
    margin-top: 9px;
}
.st-lock {
    flex: none;
    width: 16px;
    height: 16px;
    margin: 9px 0 0 21px;
}
.st-sep {
    flex: none;
    width: 1px;
    height: 30px;
    margin: 2px 7px 0 8px;
    background-color: #2f2f2f;
}
.st-msg {
    line-height: 33px;
}
.st-msg b {
    font-weight: 700;
}
.st-right {
    margin-left: auto;
    display: flex;
    align-items: flex-start;
}
.st-arrow {
    flex: none;
    width: 10px;
    height: 16px;
    margin-top: 9px;
}
.st-page {
    width: 34px;
    margin: 0 14px 0 15px;
    justify-content: center;
    padding: 0;
}
.st-sep2 {
    margin: 2px 6px 0 13px;
}
.coords {
    flex: none;
    width: 71px;
    display: grid;
    grid-template-columns: 22px 49px;
    line-height: 18px;
    color: #7d7d7d;
}
.coords .num {
    text-align: right;
    white-space: nowrap;
}
.st-z, .st-r {
    flex: none;
    line-height: 33px;
    margin-left: 12px;
    width: 17px;
}
.st-zoom {
    flex: none;
    width: 89px;
}
.st-rot {
    flex: none;
    width: 102px;
    margin-right: 2px;
}
.st-zoom .val {
    padding-left: 9px;
}
.st-rot .val {
    padding-left: 15px;
}

/* DIALOG */
.dialog {
    position: absolute;
    left: 904px;
    top: 145px;
    width: 532px;
    height: 706px;
    display: flex;
    flex-direction: column;
    background-color: #2d2d2d;
    border-radius: 12px 12px 0 0;
    box-shadow: 0 2px 10px rgba(0, 0, 0, 0.5);
    color: #d0d0d0;
}
.dlg-head {
    flex: none;
    height: 38px;
    background-color: #1e1e1e;
    border-radius: 12px 12px 0 0;
    border-bottom: 1px solid #111;
    display: flex;
    align-items: center;
    justify-content: center;
    position: relative;
}
.dlg-title {
    font-weight: 700;
    font-size: 13.600px;
    color: #eee;
}
.dlg-btns {
    position: absolute;
    right: 8px;
    top: 8px;
    display: flex;
    gap: 12px;
}
.dlg-btns span {
    width: 22px;
    height: 22px;
    border-radius: 50%;
    background-color: #383838;
    display: flex;
    align-items: center;
    justify-content: center;
}
.dlg-btns svg {
    width: 12px;
    height: 12px;
}
.dock-tabs {
    flex: none;
    height: 43px;
    padding: 5px 6px 0 15px;
    display: flex;
    justify-content: space-between;
    align-items: flex-start;
}
.dock-tab {
    width: 207px;
    height: 38px;
    padding: 0 0 0 12px;
    display: flex;
    align-items: center;
    gap: 5px;
    background-color: #2f2f2f;
    border-bottom: 4px solid #1a4d96;
    color: #c0c0c0;
}
.dock-tab svg {
    width: 16px;
    height: 16px;
}
.dock-tab b {
    font-size: 17px;
    line-height: 16px;
    color: #999;
    margin-left: 3px;
}
.dock-more {
    width: 30px;
    height: 30px;
    margin-top: 3px;
    border-radius: 5px;
    background-color: #333;
    display: flex;
    align-items: center;
    justify-content: center;
}
.dock-more svg {
    width: 16px;
    height: 16px;
}
.pane {
    flex: none;
    height: 620px;
    margin: 0 6px 0 7px;
    border: 1px solid #1e1e1e;
    display: flex;
    flex-direction: column;
}
.nb-tabs {
    flex: none;
    height: 28px;
    border-bottom: 1px solid #1e1e1e;
    display: flex;
    padding-left: 7px;
}
.nb-tabs span {
    flex: none;
    height: 28px;
    line-height: 25px;
    padding: 0 7px;
    margin-right: 8.800px;
    color: #c0c0c0;
}
.nb-tabs span.on {
    border-bottom: 3px solid #1a4d96;
}
.nb-body {
    flex: 1;
    display: flex;
    padding: 6px 0 0 8px;
}
.col-left {
    flex: none;
    width: 242px;
}
.col-right {
    flex: none;
    width: 180px;
}
.link {
    flex: none;
    width: 12px;
    height: 30px;
    margin: 84px 4px 0 5px;
}
h3 {
    font-size: 15px;
    line-height: 20px;
    font-weight: 700;
    color: #e4e4e4;
}
.row {
    display: flex;
    align-items: center;
    margin-top: 5px;
}
.lbl-56 {
    flex: none;
    width: 56px;
}
.lbl-units {
    flex: none;
    width: 113px;
}
.grow {
    flex: 1;
}
.unit {
    flex: none;
    width: 65px;
    margin-left: 4px;
    padding-left: 10px;
}
.col-right .unit {
    margin-left: 0;
}
.orient {
    height: 26px;
    justify-content: space-between;
    padding-right: 5px;
    margin-top: 4px;
}
.orient-opts {
    display: flex;
    align-items: center;
}
.radio {
    width: 15px;
    height: 15px;
    border-radius: 50%;
    border: 1px solid #1a1a1a;
    background-color: #3a3a3a;
}
.radio.on {
    background-color: #fff;
    border: 3.500px solid #1c6cd6;
}
.port {
    width: 16px;
    height: 20px;
    margin: 0 9.600px 0 8.400px;
}
.land {
    width: 20px;
    height: 16px;
    margin-left: 5.500px;
}
.resize {
    height: 31px;
    margin-top: 6px;
    justify-content: space-between;
}
.resize-btn {
    width: 49px;
    height: 31px;
    border: 1px solid #222;
    border-radius: 6px;
    background-color: #333;
    display: flex;
    align-items: center;
    justify-content: center;
}
.resize-btn svg {
    width: 18px;
    height: 18px;
}
.scale {
    margin-top: 13px;
}
.per-unit {
    margin: 11px 0 0 56px;
    font-size: 12px;
    line-height: 14px;
}
.viewbox {
    margin: 13px 0 0 6px;
    line-height: 20px;
    display: flex;
    align-items: center;
    gap: 7px;
}
.viewbox i {
    border-top: 5px solid transparent;
    border-bottom: 5px solid transparent;
    border-left: 5px solid #ddd;
}
.preview {
    width: 178px;
    height: 132px;
    margin-top: 5px;
    background-color: #ccc;
    display: flex;
    justify-content: center;
    padding-top: 7px;
}
.sheet {
    width: 85px;
    height: 119px;
    background-color: #fff;
    border: 1px solid #eee;
    box-shadow: 2px 2px 4px rgba(0, 0, 0, 0.35);
}
.colors {
    display: flex;
    width: 178px;
    padding-left: 8px;
    gap: 5px;
    margin-top: 4px;
}
.color-cell {
    width: 51px;
    text-align: center;
    line-height: 18px;
}
.color-btn {
    height: 33px;
    border: 1px solid #222;
    border-radius: 6px;
    background-color: #333;
    padding: 4px 8px 0;
}
.color-btn i {
    height: 28px;
    border-radius: 3px 3px 0 0;
}
.c-page { background-color: #fff; }
.c-border { background: linear-gradient(90deg, #888 50%, #000 50%); }
.c-desk { background-color: #d6d6d6; }
.chk {
    height: 22px;
    display: flex;
    align-items: center;
    gap: 4px;
    padding-left: 4px;
}
.colors + .chk {
    margin-top: 12px;
}
.chk i {
    flex: none;
    width: 16px;
    height: 16px;
    border-radius: 4px;
    border: 1px solid #1a1a1a;
    background-color: #3a3a3a;
    position: relative;
}
.chk i.on {
    background-color: #1c6cd6;
    border-color: #1c6cd6;
}
.chk i.on::after {
    content: "";
    position: absolute;
    left: 4.500px;
    top: 1.500px;
    width: 5px;
    height: 8.500px;
    border: solid #fff;
    border-width: 0 2.200px 2.200px 0;
    transform: rotate(42deg);
}
.chk.sub {
    padding-left: 18px;
}
.render {
    margin-top: 8px;
    margin-bottom: 1px;
}

/* TOOLTIP + HIGHLIGHT */
.tooltip {
    position: absolute;
    left: 881px;
    top: 468px;
    width: 512px;
    height: 45px;
    border-radius: 5px;
    background-color: rgba(0, 0, 0, 0.78);
    border: 1px solid rgba(255, 255, 255, 0.05);
    color: #f4f4f4;
    font-size: 14.050px;
    line-height: 43px;
    padding-left: 13px;
    white-space: nowrap;
}
.red-oval {
    position: absolute;
    left: 897px;
    top: 422px;
    width: 288px;
    height: 51px;
    border: 8px solid #f00;
    border-radius: 24px;
}
```
